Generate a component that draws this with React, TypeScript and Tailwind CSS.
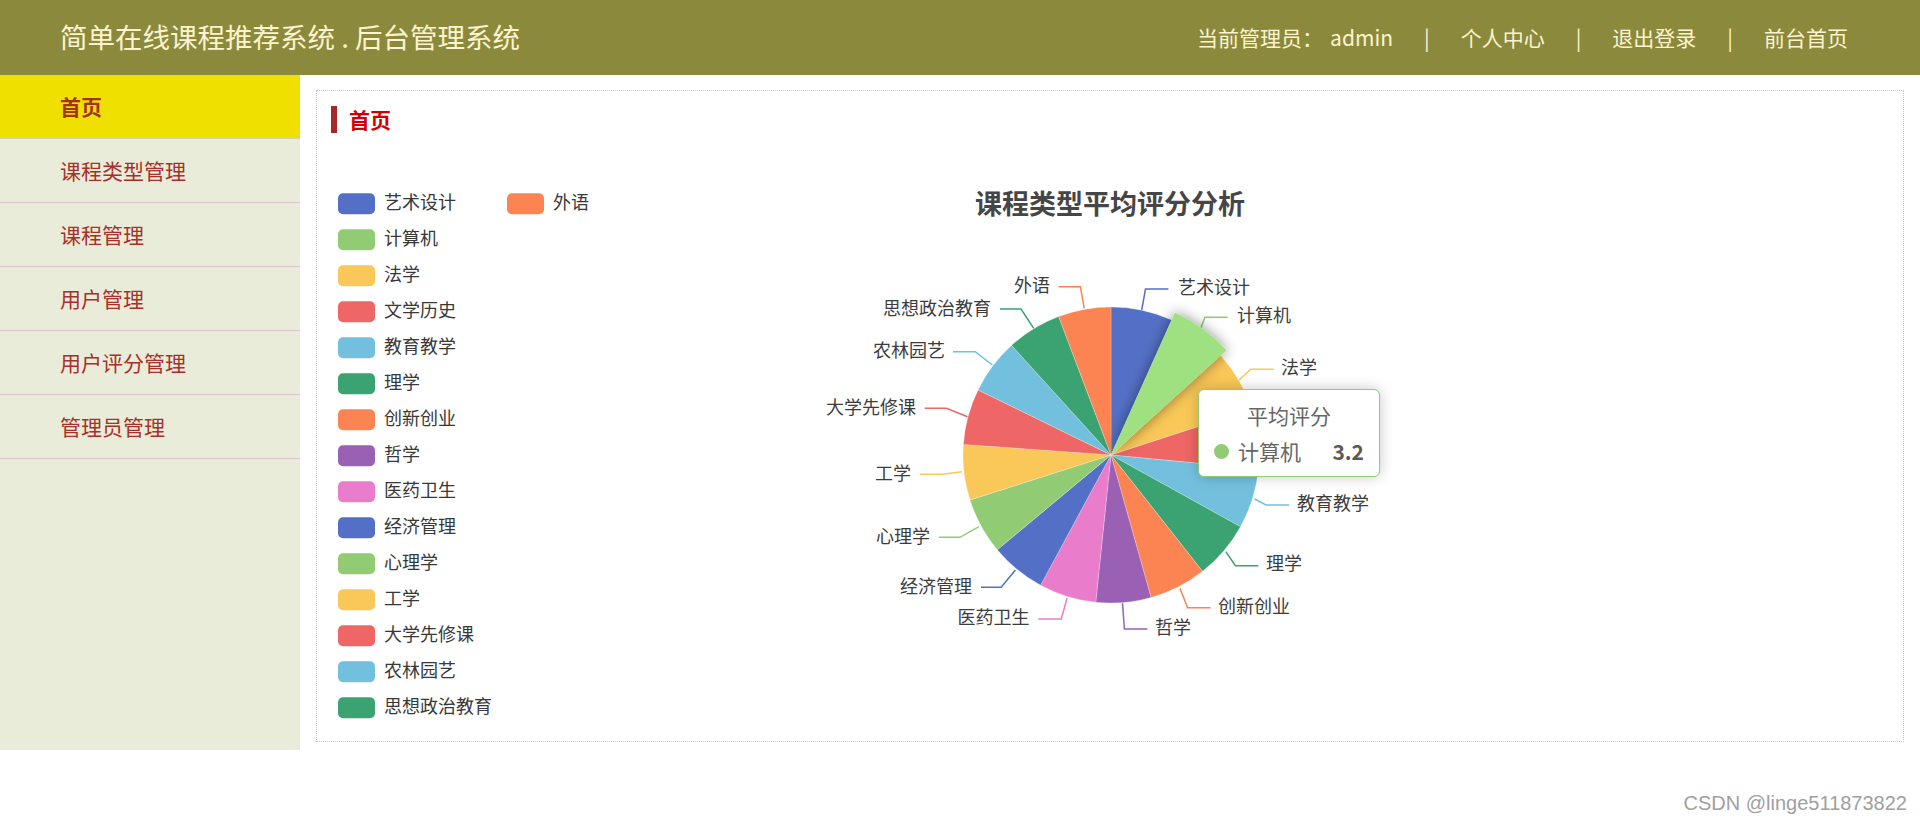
import React from "react";

const FONT = '"Noto Sans CJK SC", "Microsoft YaHei", sans-serif';

const items = [
  { name: "艺术设计", color: "#5470c6" },
  { name: "计算机", color: "#91cc75" },
  { name: "法学", color: "#fac858" },
  { name: "文学历史", color: "#ee6666" },
  { name: "教育教学", color: "#73c0de" },
  { name: "理学", color: "#3ba272" },
  { name: "创新创业", color: "#fc8452" },
  { name: "哲学", color: "#9a60b4" },
  { name: "医药卫生", color: "#ea7ccc" },
  { name: "经济管理", color: "#5470c6" },
  { name: "心理学", color: "#91cc75" },
  { name: "工学", color: "#fac858" },
  { name: "大学先修课", color: "#ee6666" },
  { name: "农林园艺", color: "#73c0de" },
  { name: "思想政治教育", color: "#3ba272" },
  { name: "外语", color: "#fc8452" },
];

const bounds = [0, 24.2, 47.8, 72, 95.4, 119, 141.8, 164.3, 185.9, 208.4, 230.2, 252.3, 274.1, 296.1, 317.8, 339.3, 360];

type Label = { pts: number[][]; tx: number; ty: number; anchor: "start" | "end"; hidden?: boolean };

const labels: Label[] = [
  { pts: [[1141.7, 310], [1145.5, 289], [1168.4, 289]], tx: 1178, ty: 288.5, anchor: "start" },
  { pts: [[1201, 328], [1204.8, 317.3], [1227.8, 317.3]], tx: 1237, ty: 316.5, anchor: "start" },
  { pts: [[1239.2, 380], [1250.7, 369.3], [1273.7, 369.3]], tx: 1281, ty: 368.5, anchor: "start" },
  { pts: [[1258, 438.8], [1272, 436.4], [1290, 436.4]], tx: 1298, ty: 436, anchor: "start", hidden: true },
  { pts: [[1254.6, 499], [1266, 505], [1289, 505]], tx: 1297, ty: 504, anchor: "start" },
  { pts: [[1225.8, 551.7], [1235.4, 565.7], [1258.4, 565.7]], tx: 1266, ty: 564.5, anchor: "start" },
  { pts: [[1180, 588.3], [1187.6, 607.7], [1210.5, 607.7]], tx: 1218, ty: 607, anchor: "start" },
  { pts: [[1122.5, 603.3], [1124.4, 629], [1147.4, 629]], tx: 1155, ty: 628.5, anchor: "start" },
  { pts: [[1067, 598.3], [1061.3, 619], [1038.3, 619]], tx: 1029.5, ty: 618.5, anchor: "end" },
  { pts: [[1015.4, 570], [1001.2, 587.3], [981, 587.3]], tx: 972, ty: 587, anchor: "end" },
  { pts: [[979, 526.7], [959.9, 537.3], [938.8, 537.3]], tx: 930, ty: 537, anchor: "end" },
  { pts: [[961.8, 471.7], [942.6, 474.3], [919.7, 474.3]], tx: 911, ty: 474, anchor: "end" },
  { pts: [[967.5, 416.7], [946.5, 408.3], [924.7, 408.3]], tx: 916, ty: 408.5, anchor: "end" },
  { pts: [[992.4, 365], [975.2, 351.7], [953, 351.7]], tx: 945, ty: 351.5, anchor: "end" },
  { pts: [[1033.7, 328.3], [1021, 309], [1000, 309]], tx: 991, ty: 309, anchor: "end" },
  { pts: [[1084.2, 308.3], [1080.4, 286.7], [1058.6, 286.7]], tx: 1050, ty: 286.5, anchor: "end" },
];

const CX = 1111;
const CY = 455;
const R = 148;
const DY = -2.5;

function pt(r: number, deg: number) {
  const a = (deg * Math.PI) / 180;
  return [CX + r * Math.sin(a), CY - r * Math.cos(a)];
}

function slicePath(r: number, a0: number, a1: number) {
  const [x0, y0] = pt(r, a0);
  const [x1, y1] = pt(r, a1);
  const large = a1 - a0 > 180 ? 1 : 0;
  return `M ${CX} ${CY} L ${x0} ${y0} A ${r} ${r} 0 ${large} 1 ${x1} ${y1} Z`;
}

function Chart() {
  const hovered = 1;
  return (
    <svg className="block" width={1586} height={608} viewBox="317 133 1586 608" style={{ fontFamily: FONT }}>
      <defs>
        <filter id="sliceShadow" x="-50%" y="-50%" width="200%" height="200%">
          <feDropShadow dx="0" dy="0" stdDeviation="7" floodColor="#000" floodOpacity="0.45" />
        </filter>
      </defs>

      <text x={1110} y={205 + DY} textAnchor="middle" dominantBaseline="central" fontSize={27} fontWeight={700} fill="#464646">
        课程类型平均评分分析
      </text>

      {items.map((it, i) => {
        const col = i === 15 ? 1 : 0;
        const row = i === 15 ? 0 : i;
        const rx = col === 0 ? 338 : 507;
        const cy = 203.7 + row * 36;
        return (
          <g key={it.name}>
            <rect x={rx} y={cy - 10.5} width={37} height={21} rx={5} fill={it.color} />
            <text x={rx + 46} y={cy + DY} dominantBaseline="central" fontSize={18} fill="#383838">
              {it.name}
            </text>
          </g>
        );
      })}

      {labels.map((l, i) =>
        l.hidden ? null : (
          <g key={i}>
            <polyline points={l.pts.map((p) => p.join(",")).join(" ")} fill="none" stroke={items[i].color} strokeWidth={1.5} />
            <text x={l.tx} y={l.ty + DY} textAnchor={l.anchor} dominantBaseline="central" fontSize={18} fill="#3c3c3c">
              {items[i].name}
            </text>
          </g>
        )
      )}

      {items.map((it, i) =>
        i === hovered ? null : (
          <path key={it.name} d={slicePath(R, bounds[i], bounds[i + 1])} fill={it.color} stroke="#ffffff" strokeWidth={0.4} strokeOpacity={0.6} />
        )
      )}
      <path d={slicePath(156, bounds[hovered], bounds[hovered + 1])} fill="#9fe080" filter="url(#sliceShadow)" />
    </svg>
  );
}

function Tooltip() {
  return (
    <div className="absolute left-[881px] top-[298px] w-[182px] h-[88px] bg-white border border-[#91cc75] rounded-[6px] shadow-[0_0_14px_rgba(0,0,0,0.22)] px-[15px] pt-[10px] text-[#666]">
      <div className="text-[21px] leading-[30px] text-center">平均评分</div>
      <div className="flex items-center mt-[6px] h-[30px] text-[21px] leading-[30px]">
        <span className="w-[15px] h-[15px] rounded-full bg-[#91cc75]" />
        <span className="ml-[9px]">计算机</span>
        <span className="ml-auto font-bold text-[#5a5a5a]">3.2</span>
      </div>
    </div>
  );
}

const navItems = ["首页", "课程类型管理", "课程管理", "用户管理", "用户评分管理", "管理员管理"];

export default function App() {
  return (
    <div className="relative w-full h-[824px] bg-white overflow-hidden" style={{ fontFamily: FONT }}>
      <header className="h-[75px] bg-[#8b8a3c] flex items-center justify-between pl-[60px] pr-[72px] pb-[1px]">
        <div className="text-[27.5px] text-[#fdf3cf] leading-none">简单在线课程推荐系统 . 后台管理系统</div>
        <div className="flex items-center text-[21px] text-[#fdf3cf] leading-none">
          <span>当前管理员：</span>
          <span className="ml-[7px]">admin</span>
          <span className="mx-[31px]">|</span>
          <span>个人中心</span>
          <span className="mx-[31px]">|</span>
          <span>退出登录</span>
          <span className="mx-[31px]">|</span>
          <span>前台首页</span>
        </div>
      </header>

      <div className="flex">
        <aside className="w-[300px] h-[675px] bg-[#e8ecd9] shrink-0">
          {navItems.map((n, i) => (
            <div
              key={n}
              className={
                i === 0
                  ? "h-[64px] flex items-center pl-[60px] text-[21px] font-bold text-[#a3321c] bg-[#efe000] border-b border-[#d4d0c8]"
                  : "h-[64px] flex items-center pl-[60px] text-[21px] text-[#a8302a] border-b border-[#dcc4ca]"
              }
            >
              {n}
            </div>
          ))}
        </aside>

        <main className="flex-1 pt-[15px] px-[16px]">
          <div className="relative h-[652px] border border-dotted border-[#c3c3ef]">
            <div className="flex items-center h-[27px] mt-[15px] ml-[14px]">
              <span className="w-[6px] h-[27px] bg-[#a8282a]" />
              <span className="ml-[12px] text-[21px] font-bold text-[#d40000] leading-none">首页</span>
            </div>
            <Chart />
            <Tooltip />
          </div>
        </main>
      </div>

      <div className="absolute right-[13px] top-[791px] text-[20px] leading-[24px] text-[#a0a0a0]" style={{ fontFamily: '"Liberation Sans", Arial, sans-serif' }}>
        CSDN @linge511873822
      </div>
    </div>
  );
}
